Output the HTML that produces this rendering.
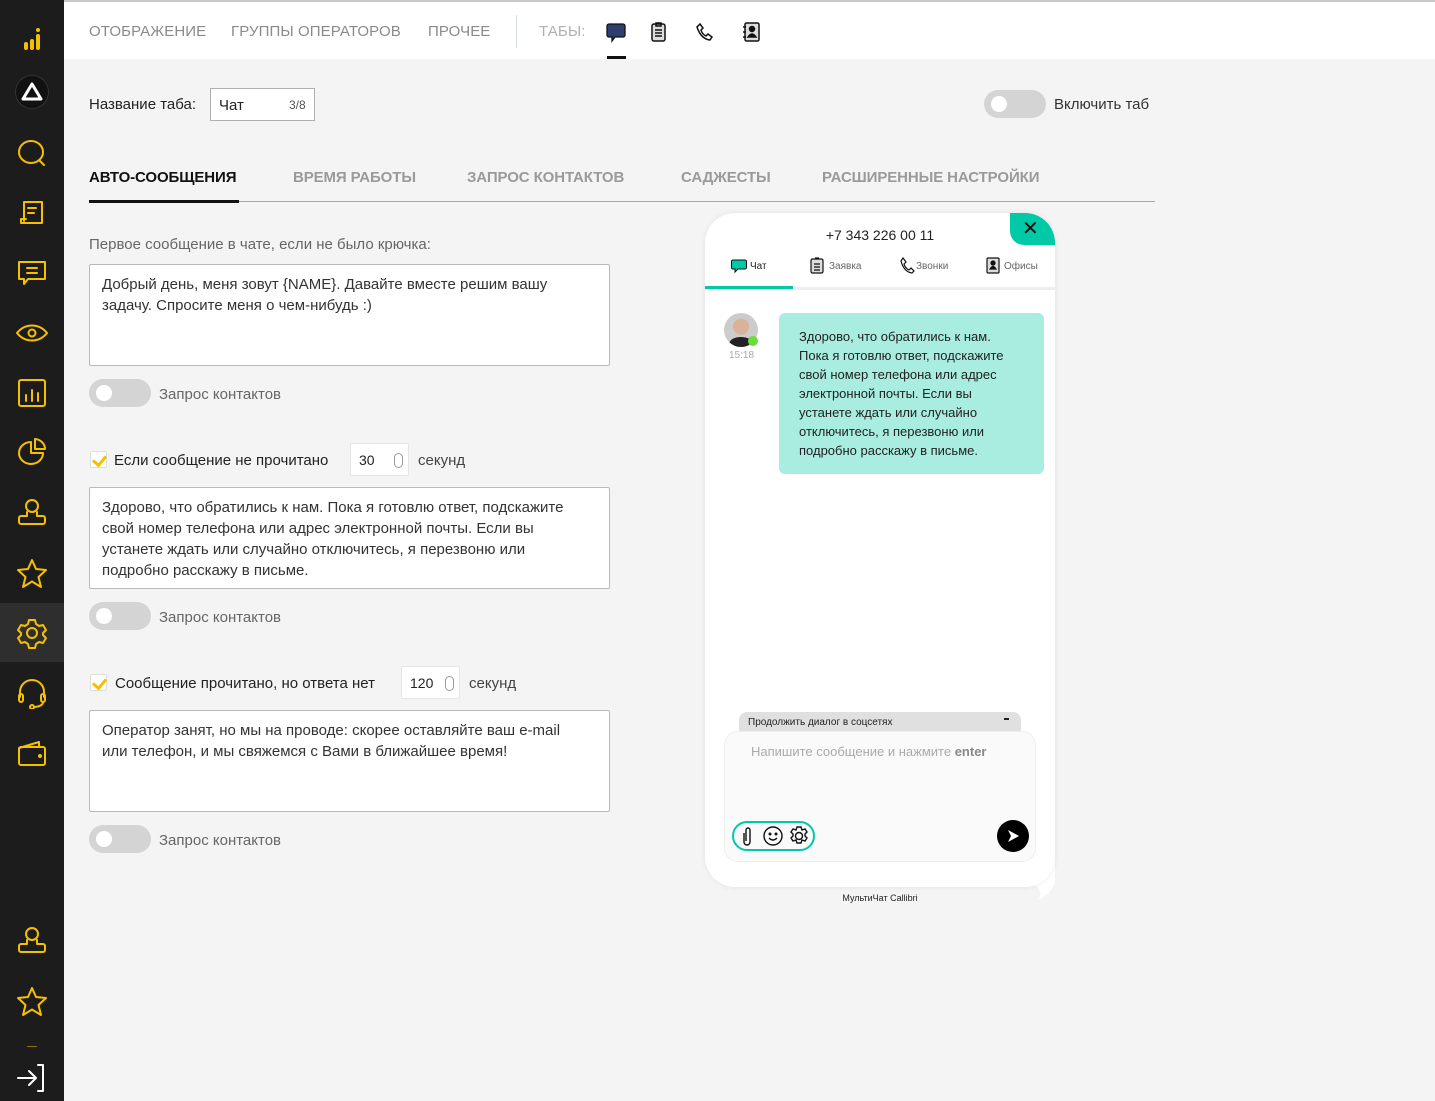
<!DOCTYPE html>
<html><head><meta charset="utf-8">
<style>
*{box-sizing:border-box;margin:0;padding:0}
body{width:1435px;height:1101px;overflow:hidden;background:#f4f4f4;font-family:"Liberation Sans","DejaVu Sans",sans-serif;color:#222;position:relative}
.a{position:absolute}
#sb{left:0;top:0;width:64px;height:1101px;background:#1c1c1c}
#sb svg{position:absolute;left:16px;width:32px;height:32px;fill:none;stroke:#f5c000;stroke-width:2;stroke-linecap:round;stroke-linejoin:round}
#top{left:64px;top:0;width:1371px;height:59px;background:#fff;border-top:2px solid #c8c8c8}
.nav{top:23px;font-size:15px;color:#8a8a8a;letter-spacing:.1px}
.tab{top:169px;font-size:15px;color:#9a9a9a;font-weight:bold;letter-spacing:-.1px}
.ta{background:#fff;border:1px solid #b9b9b9;border-radius:2px;font-size:15px;line-height:21px;padding:9px 24px 9px 12px;color:#333}
.tg{width:62px;height:28px;border-radius:14px;background:#d4d4d4}
.tg:after{content:"";position:absolute;left:7px;top:6px;width:16px;height:16px;border-radius:50%;background:#fff}
.lbl{font-size:15px;color:#666}
.cb{width:17px;height:17px;background:#fff;border:1px solid #ddd;border-radius:2px}
.cb:after{content:"";position:absolute;left:4px;top:1px;width:6px;height:10px;border:solid #f5c000;border-width:0 3px 3px 0;transform:rotate(40deg)}
.num{background:#fff;border:1px solid #e6e6e6;border-radius:2px;font-size:14px;padding:8px 8px;height:33px}
.num i{position:absolute;right:5px;top:9px;width:9px;height:15px;border:1px solid #999;border-radius:5px}
</style></head><body>
<div id="sb" class="a">
<svg style="top:22px" viewBox="0 0 32 32"><g stroke-width="4"><path d="M10 26v-4M16 26v-7M22 26v-12"/></g><circle cx="22" cy="8" r="2" fill="#f5c000" stroke="none"/></svg>
<div class="a" style="left:15px;top:75px;width:34px;height:34px;border-radius:50%;background:#111;border:1px solid #333"></div>
<svg style="top:76px;stroke:#fff;stroke-width:3" viewBox="0 0 32 32"><path d="M16 8L25 23H7Z"/></svg>
<svg style="top:137px" viewBox="0 0 32 32"><ellipse cx="15" cy="15" rx="12" ry="11"/><path d="M23 23l5 5"/></svg>
<svg style="top:197px" viewBox="0 0 32 32"><path d="M8 24V5h18v21H5v-4h5M12 11h8M12 16h6"/></svg>
<svg style="top:257px" viewBox="0 0 32 32"><path d="M3 5h26v17H12l-4 5v-5H3zM11 11h10M11 16h10"/></svg>
<svg style="top:317px" viewBox="0 0 32 32"><path d="M1 16c8-10 22-10 30 0c-8 10-22 10-30 0z"/><circle cx="16" cy="16" r="3.5"/></svg>
<svg style="top:377px" viewBox="0 0 32 32"><rect x="3" y="3" width="26" height="26" rx="2"/><path d="M10 24v-6M16 24v-11M22 24v-8"/></svg>
<svg style="top:436px" viewBox="0 0 32 32"><path d="M15 6A12 11 0 1 0 27 17H15z"/><path d="M19 3v10h10A11 10 0 0 0 19 3"/></svg>
<svg style="top:497px" viewBox="0 0 32 32"><circle cx="16" cy="9" r="6"/><path d="M11 15v4H5a2 2 0 0 0-2 2v4a2 2 0 0 0 2 2h22a2 2 0 0 0 2-2v-4a2 2 0 0 0-2-2h-6v-4"/></svg>
<svg style="top:557px" viewBox="0 0 32 32"><path d="M16 3l4 9 10 1-7.5 7 2.5 10-9-5.5L7 30l2.5-10L2 13l10-1z"/></svg>
<div class="a" style="left:0;top:603px;width:64px;height:59px;background:#2e2e2e"></div>
<svg style="top:617px" viewBox="0 0 32 32"><circle cx="16" cy="16" r="5"/><path d="M13 3h6l1 4 3 2 4-1 3 5-3 3v2l3 3-3 5-4-1-3 2-1 4h-6l-1-4-3-2-4 1-3-5 3-3v-2L2 13l3-5 4 1 3-2z"/></svg>
<svg style="top:677px" viewBox="0 0 32 32"><path d="M4 20v-5a12 12 0 0 1 24 0v5"/><rect x="3" y="17" width="4" height="8" rx="2"/><rect x="25" y="17" width="4" height="8" rx="2"/><path d="M27 25q0 4-8 5"/><circle cx="16" cy="30" r="2"/></svg>
<svg style="top:737px" viewBox="0 0 32 32"><path d="M3 11l20-6v5"/><rect x="3" y="10" width="26" height="18" rx="2"/><circle cx="24" cy="19" r="1" fill="#f5c000"/></svg>
<svg style="top:925px" viewBox="0 0 32 32"><circle cx="16" cy="9" r="6"/><path d="M11 15v4H5a2 2 0 0 0-2 2v4a2 2 0 0 0 2 2h22a2 2 0 0 0 2-2v-4a2 2 0 0 0-2-2h-6v-4"/></svg>
<svg style="top:985px" viewBox="0 0 32 32"><path d="M16 3l4 9 10 1-7.5 7 2.5 10-9-5.5L7 30l2.5-10L2 13l10-1z"/></svg>
<div class="a" style="left:27px;top:1046px;width:10px;height:1px;background:#8a7000"></div>
<svg style="top:1062px;stroke:#fff" viewBox="0 0 32 32"><path d="M2 16h18M13 9l7 7-7 7M22 3h5v26h-5"/></svg>
</div>
<div id="top" class="a"></div>
<div class="a nav" style="left:89px">ОТОБРАЖЕНИЕ</div>
<div class="a nav" style="left:231px">ГРУППЫ ОПЕРАТОРОВ</div>
<div class="a nav" style="left:428px">ПРОЧЕЕ</div>
<div class="a" style="left:516px;top:15px;width:1px;height:33px;background:#d8dde2"></div>
<div class="a nav" style="left:539px;color:#b0b0b0">ТАБЫ:</div>
<svg class="a" style="left:606px;top:23px" width="20" height="20" viewBox="0 0 20 20"><path d="M3 1h14a2 2 0 0 1 2 2v9a2 2 0 0 1-2 2H9l-3 4v-4H3a2 2 0 0 1-2-2V3a2 2 0 0 1 2-2z" fill="#2d3f6e" stroke="#111" stroke-width="1.3"/></svg>
<div class="a" style="left:607px;top:56px;width:19px;height:3px;background:#111"></div>
<svg class="a" style="left:650px;top:21px" width="18" height="22" viewBox="0 0 18 22" fill="none" stroke="#111" stroke-width="1.5"><rect x="2" y="3" width="13" height="17" rx="2" fill="#ddd"/><path d="M6 2h5v3H6zM5 9h7M5 12h7M5 15h7"/></svg>
<svg class="a" style="left:695px;top:22px" width="20" height="20" viewBox="0 0 20 20" fill="none" stroke="#111" stroke-width="1.5"><path d="M5 2l3 4-2 2q1 4 5 6l2-2 4 3-2 3Q6 17 2 5z"/></svg>
<svg class="a" style="left:742px;top:21px" width="20" height="22" viewBox="0 0 20 22" fill="none" stroke="#111" stroke-width="1.5"><rect x="3" y="2" width="14" height="18" rx="1.5" fill="#ddd"/><circle cx="10" cy="8" r="2.5" fill="#111"/><path d="M6 16q4-6 8 0z" fill="#111"/><path d="M1 6h3M1 11h3M1 16h3"/></svg>

<div class="a" style="left:89px;top:96px;font-size:15px">Название таба:</div>
<div class="a" style="left:210px;top:88px;width:105px;height:33px;background:#fff;border:1px solid #b0b0b0"></div>
<div class="a" style="left:219px;top:97px;font-size:15px">Чат</div>
<div class="a" style="left:289px;top:98px;font-size:12px;color:#555">3/8</div>
<div class="a tg" style="left:984px;top:90px"></div>
<div class="a" style="left:1054px;top:96px;font-size:15px;color:#333">Включить таб</div>

<div class="a tab" style="left:89px;color:#111">АВТО-СООБЩЕНИЯ</div>
<div class="a tab" style="left:293px">ВРЕМЯ РАБОТЫ</div>
<div class="a tab" style="left:467px">ЗАПРОС КОНТАКТОВ</div>
<div class="a tab" style="left:681px">САДЖЕСТЫ</div>
<div class="a tab" style="left:822px">РАСШИРЕННЫЕ НАСТРОЙКИ</div>
<div class="a" style="left:89px;top:201px;width:1066px;height:1px;background:#a8a8a8"></div>
<div class="a" style="left:89px;top:200px;width:150px;height:3px;background:#111"></div>

<div class="a lbl" style="left:89px;top:236px">Первое сообщение в чате, если не было крючка:</div>
<div class="a ta" style="left:89px;top:264px;width:521px;height:102px">Добрый день, меня зовут {NAME}. Давайте вместе решим вашу задачу. Спросите меня о чем-нибудь :)</div>
<div class="a tg" style="left:89px;top:379px"></div>
<div class="a lbl" style="left:159px;top:386px">Запрос контактов</div>

<div class="a cb" style="left:90px;top:451px"></div>
<div class="a" style="left:114px;top:452px;font-size:15px">Если сообщение не прочитано</div>
<div class="a num" style="left:350px;top:443px;width:59px">30<i></i></div>
<div class="a lbl" style="left:418px;top:452px;color:#444">секунд</div>
<div class="a ta" style="left:89px;top:487px;width:521px;height:102px;padding-right:30px">Здорово, что обратились к нам. Пока я готовлю ответ, подскажите свой номер телефона или адрес электронной почты. Если вы устанете ждать или случайно отключитесь, я перезвоню или подробно расскажу в письме.</div>
<div class="a tg" style="left:89px;top:602px"></div>
<div class="a lbl" style="left:159px;top:609px">Запрос контактов</div>

<div class="a cb" style="left:90px;top:674px"></div>
<div class="a" style="left:115px;top:675px;font-size:15px">Сообщение прочитано, но ответа нет</div>
<div class="a num" style="left:401px;top:666px;width:59px">120<i></i></div>
<div class="a lbl" style="left:469px;top:675px;color:#444">секунд</div>
<div class="a ta" style="left:89px;top:710px;width:521px;height:102px;padding-right:30px">Оператор занят, но мы на проводе: скорее оставляйте ваш e-mail или телефон, и мы свяжемся с Вами в ближайшее время!</div>
<div class="a tg" style="left:89px;top:825px"></div>
<div class="a lbl" style="left:159px;top:832px">Запрос контактов</div>

<!-- widget -->
<svg class="a" style="left:1030px;top:860px" width="26" height="42" viewBox="0 0 26 42"><path d="M0 0H25V22Q22 34 8 40Q14 32 6 26Z" fill="#fff"/></svg>
<div class="a" style="left:705px;top:213px;width:350px;height:674px;background:#fff;border-radius:30px;box-shadow:0 0 6px rgba(0,0,0,.08)"></div>
<div class="a" style="left:1010px;top:213px;width:45px;height:32px;background:#00c9a7;border-radius:0 30px 0 14px"></div>
<div class="a" style="left:1022px;top:216px;font-size:20px;color:#111;font-weight:bold">✕</div>
<div class="a" style="left:705px;top:227px;width:350px;text-align:center;font-size:14px;color:#222">+7 343 226 00 11</div>
<div class="a" style="left:705px;top:287px;width:350px;height:3px;background:#eee"></div>
<div class="a" style="left:705px;top:286px;width:88px;height:3px;background:#00c9a7"></div>
<svg class="a" style="left:731px;top:259px" width="16" height="15" viewBox="0 0 16 15"><path d="M2 1h12a1.5 1.5 0 0 1 1.5 1.5v6A1.5 1.5 0 0 1 14 10H7l-3 3v-3H2A1.5 1.5 0 0 1 .5 8.5v-6A1.5 1.5 0 0 1 2 1z" fill="#00c9a7" stroke="#111"/></svg>
<div class="a" style="left:750px;top:261px;font-size:10px;color:#222">Чат</div>
<svg class="a" style="left:810px;top:257px" width="14" height="17" viewBox="0 0 14 17" fill="#ddd" stroke="#111" stroke-width="1.2"><rect x="1" y="2" width="12" height="14" rx="1.5"/><path d="M4 7h6M4 10h6M4 13h6M5 1h4" fill="none"/></svg>
<div class="a" style="left:829px;top:261px;font-size:10px;color:#666">Заявка</div>
<svg class="a" style="left:900px;top:257px" width="16" height="17" viewBox="0 0 16 17" fill="none" stroke="#111" stroke-width="1.2"><path d="M3 1l3 4-2 2q1 4 5 6l2-2 3 3-2 2Q4 15 1 4z"/></svg>
<div class="a" style="left:916px;top:261px;font-size:10px;color:#666">Звонки</div>
<svg class="a" style="left:985px;top:257px" width="16" height="17" viewBox="0 0 16 17" stroke="#111" stroke-width="1.2"><rect x="2" y="1" width="12" height="15" rx="1" fill="#ddd"/><circle cx="8" cy="6" r="2" fill="#111"/><path d="M5 12q3-5 6 0z" fill="#111"/></svg>
<div class="a" style="left:1004px;top:261px;font-size:10px;color:#666">Офисы</div>

<div class="a" style="left:724px;top:313px;width:34px;height:34px;border-radius:50%;background:radial-gradient(circle at 50% 40%,#d9b29a 0 30%,#ccc 31%);overflow:hidden"><div class="a" style="left:5px;top:24px;width:24px;height:14px;border-radius:50%;background:#222"></div></div>
<div class="a" style="left:748px;top:336px;width:10px;height:10px;border-radius:50%;background:#6bdc3a"></div>
<div class="a" style="left:729px;top:350px;font-size:10px;color:#aaa">15:18</div>
<div class="a" style="left:779px;top:313px;width:265px;height:161px;background:#a8ede0;border-radius:6px;padding:14px 20px;font-size:13px;line-height:19px;color:#222">Здорово, что обратились к нам. Пока я готовлю ответ, подскажите свой номер телефона или адрес электронной почты. Если вы устанете ждать или случайно отключитесь, я перезвоню или подробно расскажу в письме.</div>

<div class="a" style="left:739px;top:712px;width:282px;height:24px;background:#e0e0e0;border-radius:8px 8px 0 0"></div>
<div class="a" style="left:748px;top:717px;font-size:10px;color:#222">Продолжить диалог в соцсетях</div>
<div class="a" style="left:1004px;top:718px;width:5px;height:2px;background:#222"></div>
<div class="a" style="left:724px;top:731px;width:312px;height:131px;background:#fafafa;border:1px solid #eee;border-radius:14px"></div>
<div class="a" style="left:751px;top:744px;font-size:13px;color:#aaa">Напишите сообщение и нажмите <b style="color:#888">enter</b></div>
<div class="a" style="left:732px;top:821px;width:83px;height:30px;border:2px solid #00c9a7;border-radius:15px"></div>
<svg class="a" style="left:738px;top:825px" width="72" height="22" viewBox="0 0 72 22" fill="none" stroke="#111" stroke-width="1.4"><path d="M6 8v9a3 3 0 0 0 6 0V5a2 2 0 0 0-4 0v11"/><circle cx="35" cy="11" r="9"/><circle cx="32" cy="9" r=".8" fill="#111"/><circle cx="38" cy="9" r=".8" fill="#111"/><path d="M31 13q4 4 8 0"/><circle cx="61" cy="11" r="3.5"/><path d="M59 2h4l1 3 3-1 2 3-2 2v2l2 2-2 3-3-1-1 3h-4l-1-3-3 1-2-3 2-2v-2l-2-2 2-3 3 1z"/></svg>
<div class="a" style="left:997px;top:820px;width:32px;height:32px;border-radius:50%;background:#000"></div>
<svg class="a" style="left:1006px;top:829px" width="14" height="14" viewBox="0 0 14 14"><path d="M2 1l11 6-11 6 3-6z" fill="#fff"/></svg>
<div class="a" style="left:705px;top:893px;width:350px;text-align:center;font-size:9px;color:#222">МультиЧат Callibri</div>
</body></html>
